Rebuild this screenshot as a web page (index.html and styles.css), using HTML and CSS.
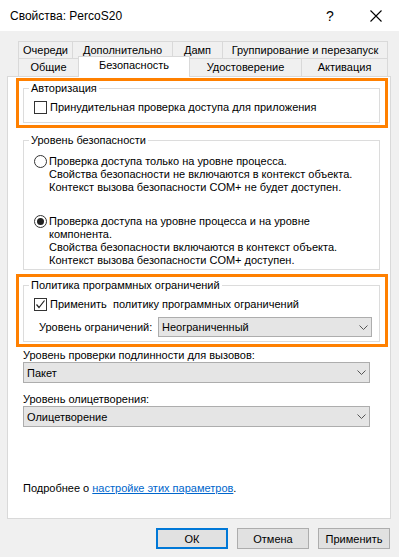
FILE: index.html
```html
<!DOCTYPE html>
<html lang="ru">
<head>
    <meta charset="UTF-8">
    <title>Свойства: PercoS20</title>
    <link rel="stylesheet" href="styles.css">
</head>
<body>
    <div class="titlebar">
        <span class="title">Свойства: PercoS20</span>
        <span class="help">?</span>
        <span class="close">
            <svg width="12" height="12" viewBox="0 0 12 12"><path d="M0.5 0.5L11.5 11.5M11.5 0.5L0.5 11.5" stroke="#000" stroke-width="1.1" fill="none"/></svg>
        </span>
    </div>

    <div class="tabs">
        <div class="tab-row back">
            <div class="tab t-queue">Очереди</div>
            <div class="tab t-advanced">Дополнительно</div>
            <div class="tab t-dump">Дамп</div>
            <div class="tab t-pool">Группирование и перезапуск</div>
        </div>
        <div class="tab-row front">
            <div class="tab t-general">Общие</div>
            <div class="tab t-security selected">Безопасность</div>
            <div class="tab t-identity">Удостоверение</div>
            <div class="tab t-activation">Активация</div>
        </div>
    </div>

    <div class="panel">
        <div class="highlight first">
            <fieldset class="group auth">
                <legend>Авторизация</legend>
                <div class="check-row">
                    <span class="checkbox"></span>
                    <span>Принудительная проверка доступа для приложения</span>
                </div>
            </fieldset>
        </div>

        <fieldset class="group security">
            <legend>Уровень безопасности</legend>
            <div class="option">
                <span class="radio"></span>
                <div class="option-text">
                    Проверка доступа только на уровне процесса.<br>
                    Свойства безопасности не включаются в контекст объекта.<br>
                    Контекст вызова безопасности COM+ не будет доступен.
                </div>
            </div>
            <div class="option second">
                <span class="radio checked"></span>
                <div class="option-text">
                    Проверка доступа на уровне процесса и на уровне<br>
                    компонента.<br>
                    Свойства безопасности включаются в контекст объекта.<br>
                    Контекст вызова безопасности COM+ доступен.
                </div>
            </div>
        </fieldset>

        <div class="highlight second">
            <fieldset class="group policy">
                <legend>Политика программных ограничений</legend>
                <div class="check-row">
                    <span class="checkbox checked">
                        <svg width="11" height="11" viewBox="0 0 11 11"><path d="M1.5 5.5L4 8.5L9.5 1.5" stroke="#222" stroke-width="1.2" fill="none"/></svg>
                    </span>
                    <span>Применить&nbsp; политику программных ограничений</span>
                </div>
                <div class="combo-row">
                    <span class="combo-label">Уровень ограничений:</span>
                    <div class="combo narrow">
                        <span>Неограниченный</span>
                        <svg class="chevron" width="9" height="5" viewBox="0 0 9 5"><path d="M0.5 0.5L4.5 4.5L8.5 0.5" stroke="#555" fill="none"/></svg>
                    </div>
                </div>
            </fieldset>
        </div>

        <div class="field-label">Уровень проверки подлинности для вызовов:</div>
        <div class="combo wide">
            <span>Пакет</span>
            <svg class="chevron" width="9" height="5" viewBox="0 0 9 5"><path d="M0.5 0.5L4.5 4.5L8.5 0.5" stroke="#555" fill="none"/></svg>
        </div>

        <div class="field-label lower">Уровень олицетворения:</div>
        <div class="combo wide">
            <span>Олицетворение</span>
            <svg class="chevron" width="9" height="5" viewBox="0 0 9 5"><path d="M0.5 0.5L4.5 4.5L8.5 0.5" stroke="#555" fill="none"/></svg>
        </div>

        <div class="more">Подробнее о <a class="link" href="#">настройке этих параметров</a>.</div>
    </div>

    <div class="buttons">
        <button class="btn default">ОК</button>
        <button class="btn">Отмена</button>
        <button class="btn">Применить</button>
    </div>
</body>
</html>
```

FILE: styles.css
```css
* {
    box-sizing: border-box;
}

body {
    margin: 0;
    width: 399px;
    height: 557px;
    overflow: hidden;
    background: #f0f0f0;
    font-family: "Liberation Sans", Arial, sans-serif;
    font-size: 11px;
    color: #000;
}

/* title bar */
.titlebar {
    height: 31px;
    background: #fff;
    display: flex;
    align-items: center;
    padding-left: 10px;
    font-size: 12px;
}

.title {
    flex: 1;
}

.help {
    width: 46px;
    text-align: center;
    font-size: 14px;
}

.close {
    width: 46px;
    display: flex;
    justify-content: center;
}

/* tabs */
.tabs {
    margin: 10px 0 0 18px;
    width: 370px;
}

.tab-row {
    display: flex;
}

.tab-row.back {
    height: 17px;
}

.tab-row.front {
    height: 18px;
}

.tab {
    border-left: 1px solid #d9d9d9;
    border-top: 1px solid #d9d9d9;
    background: #f0f0f0;
    text-align: center;
    line-height: 16px;
    white-space: nowrap;
}

.tab-row.front .tab {
    line-height: 17px;
}

.tab:last-child {
    border-right: 1px solid #d9d9d9;
}

.tab.selected {
    position: relative;
    z-index: 1;
    margin-top: -2px;
    height: 21px;
    background: #fff;
    border-right: 1px solid #d9d9d9;
}

.tab.selected + .tab {
    border-left: none;
}

.t-queue { width: 54px; }
.t-advanced { width: 100px; }
.t-dump { width: 50px; }
.t-pool { width: 166px; }
.t-general { width: 60px; }
.t-security { width: 112px; }
.t-identity { width: 111px; }
.t-activation { width: 87px; }

/* panel */
.panel {
    margin-left: 7px;
    width: 384px;
    height: 443px;
    background: #fff;
    border: 1px solid #d9d9d9;
    padding: 1px 10px 0 15px;
}

.highlight {
    border: 3px solid #ff8000;
    margin: 0 -8px 0 -7px;
    padding: 0 5px 2px 4px;
}

.highlight.second {
    margin-top: 4px;
    padding-top: 1px;
}

.group {
    margin: 0;
    min-width: 0;
    border: 1px solid #dcdcdc;
    padding: 0 0 8px 5px;
}

.group legend {
    padding: 0 2px;
    line-height: 14px;
}

.group.security {
    margin-top: 5px;
    padding-bottom: 2px;
}

.group.policy {
    padding-bottom: 4px;
}

.check-row {
    display: flex;
    align-items: center;
    height: 14px;
    margin: 5px 0 0 5px;
}

.checkbox {
    width: 13px;
    height: 13px;
    border: 1px solid #333;
    background: #fff;
    margin-right: 3px;
    display: flex;
    align-items: center;
    justify-content: center;
}

.option {
    display: flex;
    align-items: flex-start;
    margin: 8px 0 0 5px;
    line-height: 13px;
}

.option.second {
    margin-top: 21px;
}

.radio {
    flex: none;
    width: 13px;
    height: 13px;
    border: 1px solid #333;
    border-radius: 50%;
    margin-right: 2px;
    display: flex;
    align-items: center;
    justify-content: center;
}

.radio.checked::after {
    content: "";
    width: 7px;
    height: 7px;
    border-radius: 50%;
    background: #222;
}

.combo-row {
    display: flex;
    align-items: center;
    margin: 6px 7px 0 10px;
}

.combo-label {
    flex: 1;
}

.combo {
    display: flex;
    align-items: center;
    justify-content: space-between;
    height: 21px;
    background: #e5e5e5;
    border: 1px solid #adadad;
    padding: 0 3px 0 3px;
}

.combo.narrow {
    width: 214px;
    height: 20px;
}

.combo.wide {
    width: 347px;
}

.field-label {
    margin-top: 1px;
    line-height: 14px;
}

.field-label.lower {
    margin-top: 9px;
}

.more {
    margin-top: 54px;
    line-height: 14px;
}

.link {
    color: #0066cc;
}

/* bottom buttons */
.buttons {
    display: flex;
    justify-content: flex-end;
    gap: 9px;
    padding: 9px 9px 0 0;
}

.btn {
    width: 72px;
    height: 21px;
    padding: 0;
    background: #e1e1e1;
    border: 1px solid #adadad;
    font: inherit;
    color: #000;
}

.btn.default {
    border: 2px solid #0078d7;
}
```
